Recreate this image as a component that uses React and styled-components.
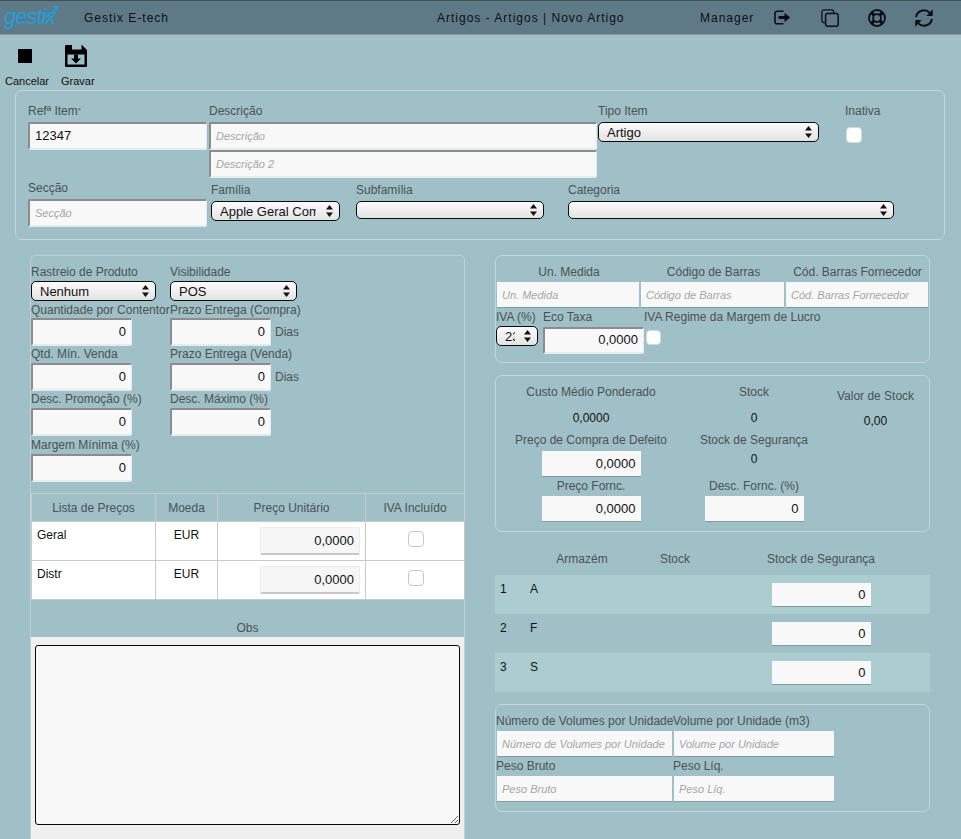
import React from 'react';
import styled, { createGlobalStyle } from 'styled-components';

const GlobalStyle = createGlobalStyle`
  html, body {
    margin: 0;
    padding: 0;
    height: 839px;
    overflow: hidden;
    background: #9fc0c6;
    font-family: "Liberation Sans", Arial, sans-serif;
    font-size: 12px;
  }
  * { box-sizing: border-box; }
`;

const Page = styled.div`
  width: 961px;
  height: 839px;
  overflow: hidden;
`;

const Header = styled.header`
  display: flex;
  align-items: center;
  height: 35px;
  background: #5f7a87;
  border-top: 1px solid #3f4f58;
  border-bottom: 1px solid #8b9699;
  color: #0c0f12;
  font-size: 12px;
  letter-spacing: 1px;
`;

const Logo = styled.div`
  position: relative;
  width: 84px;
  padding-left: 4px;
  margin-top: -2px;
  color: #1f9fdc;
  font-size: 22px;
  font-style: italic;
  letter-spacing: -1px;
  svg {
    position: absolute;
    left: 44px;
    top: 1px;
  }
`;

const HeaderText = styled.div`
  width: ${({ $w }) => $w}px;
  flex: none;
  white-space: nowrap;
`;

const HeaderIcon = styled.div`
  width: 47px;
  flex: none;
  display: flex;
  justify-content: center;
  color: #0c0f12;
`;

const Toolbar = styled.div`
  display: flex;
  gap: 12px;
  height: 55px;
  padding: 4px 0 0 5px;
`;

const ToolButton = styled.div`
  display: flex;
  flex-direction: column;
  align-items: center;
  color: #111;
  font-size: 11px;
  line-height: 14px;
`;

const ToolIcon = styled.div`
  height: 34px;
  margin: 0 4px 1px 0;
  display: flex;
  align-items: center;
  justify-content: center;
`;

const StopSquare = styled.div`
  width: 14px;
  height: 14px;
  background: #000;
`;

const Panel = styled.section`
  border: 1px solid #c3d8da;
  border-radius: 7px;
  margin-top: ${({ $mt }) => $mt || 0}px;
  height: ${({ $h }) => $h}px;
  padding: ${({ $pad }) => $pad || '0'};
`;

const TopPanel = styled(Panel)`
  width: 930px;
  margin-left: 15px;
  padding: 13px 0 0 12px;
`;

const Row = styled.div`
  display: flex;
`;

const Col = styled.div`
  width: ${({ $w }) => $w}px;
  flex: none;
  padding-top: ${({ $pt }) => $pt || 0}px;
`;

const Label = styled.label`
  display: block;
  height: 14px;
  line-height: 14px;
  margin-top: ${({ $mt }) => $mt || 0}px;
  margin-bottom: ${({ $mb }) => ($mb === undefined ? 4 : $mb)}px;
  color: #4b5254;
  font-size: 12px;
  white-space: nowrap;
  text-align: ${({ $center }) => ($center ? 'center' : 'left')};
`;

const Required = styled.span`
  font-size: 8px;
  vertical-align: 2px;
`;

const Input = styled.input`
  display: block;
  width: ${({ $w }) => $w}px;
  height: ${({ $h }) => $h || 28}px;
  margin: 0;
  padding: 0 5px 2px;
  background: #f8f8f8;
  border: none;
  border-top: 2px solid #8c8c8c;
  border-left: 2px solid #8c8c8c;
  border-right: 1px solid #e4ecee;
  border-bottom: 2px solid #e4ecee;
  border-radius: 2px;
  color: #111;
  font-family: inherit;
  font-size: 13px;
  text-align: ${({ $right }) => ($right ? 'right' : 'left')};
  &::placeholder {
    color: #a6a6a6;
    font-size: 11px;
    font-style: italic;
    opacity: 1;
  }
`;

const FlatInput = styled(Input)`
  padding: 0 5px;
  border: none;
  border-bottom: 1px solid #7d9da3;
  border-radius: 0;
  margin-left: ${({ $ml }) => $ml || 0}px;
`;

const CellInput = styled(Input)`
  padding: 0 5px;
  background: #f6f6f6;
  border: 1px solid #ececec;
  border-bottom: 2px solid #c8c8c8;
`;

const Check = styled.input.attrs({ type: 'checkbox' })`
  appearance: none;
  display: block;
  width: ${({ $size }) => $size || 16}px;
  height: ${({ $size }) => $size || 16}px;
  margin: ${({ $mt }) => $mt || 0}px 0 0 ${({ $ml }) => $ml || 0}px;
  background: #fff;
  border: 1px solid ${({ $line }) => $line || '#d8d8d8'};
  border-radius: 4px;
`;

const SelectBox = styled.div`
  position: relative;
  width: ${({ $w }) => $w}px;
  height: ${({ $h }) => $h || 20}px;
  svg {
    position: absolute;
    right: 7px;
    top: 50%;
    transform: translateY(-50%);
    pointer-events: none;
  }
`;

const SelectEl = styled.select`
  appearance: none;
  display: block;
  width: 100%;
  height: 100%;
  margin: 0;
  padding: 0 ${({ $pr }) => $pr || 20}px 0 8px;
  background: linear-gradient(#fbfbfb, #e3e3e3);
  border: 1px solid #0a0a0a;
  border-radius: 5px;
  color: #111;
  font-family: inherit;
  font-size: 13px;
`;

const Select = ({ w, h, value, pr }) => (
  <SelectBox $w={w} $h={h}>
    <SelectEl $pr={pr} defaultValue={value}>
      <option value={value}>{value}</option>
    </SelectEl>
    <svg width="7" height="12" viewBox="0 0 7 12">
      <path d="M3.5 0 7 4.6H0zM0 7.4h7L3.5 12z" fill="#111" />
    </svg>
  </SelectBox>
);

const Columns = styled.div`
  display: flex;
  gap: 30px;
  padding-left: 30px;
  margin-top: 15px;
`;

const LeftPanel = styled.section`
  width: 435px;
  height: 600px;
  flex: none;
  border: 1px solid #bdd2d6;
  border-bottom: none;
  border-radius: 5px 5px 0 0;
  padding-top: 8px;
`;

const FormGrid = styled.div`
  display: grid;
  grid-template-columns: 139px 1fr;
  grid-template-rows: 38px 45px 45px 46px 43px;
  height: 217px;
`;

const Field = styled.div`
  min-width: 0;
`;

const InputRow = styled.div`
  display: flex;
  align-items: center;
  gap: 4px;
  color: #4b5254;
  font-size: 12px;
`;

const PriceTable = styled.table`
  width: 433px;
  margin-top: 12px;
  table-layout: fixed;
  border-collapse: collapse;
  font-size: 12px;
  th {
    height: 28px;
    border: 1px solid #c4cdcf;
    color: #4b5254;
    font-weight: normal;
  }
  td {
    height: 39px;
    padding: 0;
    background: #fff;
    border: 1px solid #c8c8c8;
    color: #111;
    vertical-align: top;
  }
`;

const NameCell = styled.div`
  padding: 6px 0 0 5px;
`;

const CenterCell = styled.div`
  padding-top: 6px;
  text-align: center;
`;

const PriceCell = styled.div`
  display: flex;
  justify-content: flex-end;
  padding: 5px 5px 0 0;
`;

const CheckCell = styled.div`
  display: flex;
  justify-content: center;
  padding: 9px 0 0 1px;
`;

const ObsLabel = styled.div`
  margin-top: 21px;
  height: 16px;
  line-height: 14px;
  color: #4b5254;
  text-align: center;
`;

const ObsBox = styled.div`
  height: 202px;
  background: #f0f0f0;
  padding: 8px 4px 0;
`;

const ObsText = styled.textarea`
  display: block;
  width: 425px;
  height: 180px;
  margin: 0;
  background: #f8f8f8;
  border: 1px solid #0a0a0a;
  border-radius: 3px;
`;

const RightColumn = styled.div`
  width: 435px;
  flex: none;
`;

const MeasureGrid = styled.div`
  display: grid;
  grid-template-columns: 144px 145px 143px;
  padding-left: 1px;
`;

const TaxRow = styled.div`
  display: grid;
  grid-template-columns: 47px 101px 1fr;
  margin-top: 1px;
`;

const StockColumns = styled.div`
  display: grid;
  grid-template-columns: 190px 136px 107px;
`;

const StockCol = styled.div`
  display: flex;
  flex-direction: column;
  align-items: center;
  padding-top: ${({ $pt }) => $pt || 9}px;
`;

const Caption = styled.div`
  height: 14px;
  line-height: 14px;
  margin-top: ${({ $mt }) => $mt || 0}px;
  margin-bottom: ${({ $mb }) => $mb || 0}px;
  color: #4b5254;
  white-space: nowrap;
`;

const Value = styled.div`
  height: 14px;
  line-height: 14px;
  margin-top: ${({ $mt }) => $mt || 0}px;
  color: #111;
`;

const StockHeader = styled.div`
  display: grid;
  grid-template-columns: 35px 104px 82px 210px;
  margin-top: 20px;
  margin-bottom: 9px;
  height: 14px;
  line-height: 14px;
  color: #4b5254;
  text-align: center;
`;

const StockRow = styled.div`
  display: grid;
  grid-template-columns: 35px 104px 82px 210px;
  height: 39px;
  background: ${({ $odd }) => ($odd ? '#abcdcf' : 'transparent')};
  color: #111;
  line-height: 14px;
`;

const RowNum = styled.div`
  padding: 7px 0 0 5px;
`;

const RowName = styled.div`
  padding-top: 7px;
`;

const RowInput = styled.div`
  display: flex;
  justify-content: center;
  padding-top: 8px;
`;

const VolumeGrid = styled.div`
  display: grid;
  grid-template-columns: 177px 1fr;
  grid-auto-rows: 45px;
`;

const ExitIcon = () => (
  <svg width="17" height="15" viewBox="0 0 17 15" fill="none">
    <path d="M9.5 1.2H3A2 2 0 0 0 1 3.2v8.6a2 2 0 0 0 2 2h6.5" stroke="currentColor" strokeWidth="1.6" />
    <path d="M4.5 6h6V2.8L16.2 7.5l-5.7 4.7V9h-6z" fill="currentColor" />
  </svg>
);

const CopyIcon = () => (
  <svg width="18" height="18" viewBox="0 0 18 18" fill="none" stroke="currentColor" strokeWidth="1.3">
    <path d="M4 13.5H2.6A1.8 1.8 0 0 1 .9 11.7V2.6A1.8 1.8 0 0 1 2.6.8h8.2A1.8 1.8 0 0 1 12.6 2.6V4" />
    <rect x="4.6" y="4.6" width="12.6" height="12.6" rx="2" strokeWidth="1.5" />
  </svg>
);

const RingIcon = () => (
  <svg width="18" height="18" viewBox="0 0 18 18" fill="none" stroke="currentColor">
    <circle cx="9" cy="9" r="8" strokeWidth="1.8" />
    <circle cx="9" cy="9" r="3.9" strokeWidth="1.8" />
    <path d="M3.3 3.3l3 3M14.7 3.3l-3 3M3.3 14.7l3-3M14.7 14.7l-3-3" strokeWidth="3.2" />
  </svg>
);

const RefreshIcon = () => (
  <svg width="18" height="18" viewBox="0 0 18 18" fill="none">
    <path d="M1.1 8A8 8 0 0 1 14.6 3.6M16.9 10A8 8 0 0 1 3.4 14.4" stroke="currentColor" strokeWidth="2" />
    <path d="M17.7.3V7h-6.4zM.3 17.7V11h6.4z" fill="currentColor" />
  </svg>
);

const SaveIcon = () => (
  <svg width="22" height="22" viewBox="0 0 22 22">
    <path
      fillRule="evenodd"
      d="M1 0h16l5 5v16a1 1 0 0 1-1 1H1a1 1 0 0 1-1-1V1a1 1 0 0 1 1-1zm6 0v4.5h9.5V0zM2.5 9.5v10h17v-10z"
      fill="#000"
    />
    <path d="M9 9.5h4v4h3l-5 5-5-5h3z" fill="#000" />
  </svg>
);

const LogoArrow = () => (
  <svg width="16" height="14" viewBox="0 0 16 14" fill="none">
    <path d="M1 13 13 2.5" stroke="#1f9fdc" strokeWidth="1.6" />
    <path d="M9 1.5 15 .5l-1.5 6z" fill="#1f9fdc" />
  </svg>
);

const LeftField = ({ label, suffix, first }) => (
  <Field>
    <Label $mt={first ? 1 : 0} $mb={first ? 1 : 2}>{label}</Label>
    <InputRow>
      <Input $w={101} $right defaultValue="0" />
      {suffix}
    </InputRow>
  </Field>
);

const prices = [{ name: 'Geral' }, { name: 'Distr' }];
const warehouses = [
  { id: 1, name: 'A' },
  { id: 2, name: 'F' },
  { id: 3, name: 'S' },
];

const App = () => (
  <Page>
    <GlobalStyle />
    <Header>
      <Logo>
        gestix
        <LogoArrow />
      </Logo>
      <HeaderText $w={353}>Gestix E-tech</HeaderText>
      <HeaderText $w={263}>Artigos - Artigos | Novo Artigo</HeaderText>
      <HeaderText $w={59}>Manager</HeaderText>
      <HeaderIcon><ExitIcon /></HeaderIcon>
      <HeaderIcon><CopyIcon /></HeaderIcon>
      <HeaderIcon><RingIcon /></HeaderIcon>
      <HeaderIcon><RefreshIcon /></HeaderIcon>
    </Header>

    <Toolbar>
      <ToolButton>
        <ToolIcon><StopSquare /></ToolIcon>
        Cancelar
      </ToolButton>
      <ToolButton>
        <ToolIcon><SaveIcon /></ToolIcon>
        Gravar
      </ToolButton>
    </Toolbar>

    <TopPanel $h={150}>
      <Row>
        <Col $w={181}>
          <Label>Refª Item<Required>*</Required></Label>
          <Input $w={179} defaultValue="12347" />
        </Col>
        <Col $w={389}>
          <Label>Descrição</Label>
          <Input $w={388} placeholder="Descrição" />
          <Input $w={388} placeholder="Descrição 2" />
        </Col>
        <Col $w={247}>
          <Label>Tipo Item</Label>
          <Select w={221} value="Artigo" />
        </Col>
        <Col $w={40}>
          <Label>Inativa</Label>
          <Check $size={16} $mt={9} $ml={1} />
        </Col>
      </Row>
      <Row>
        <Col $w={183} $pt={3}>
          <Label>Secção</Label>
          <Input $w={179} placeholder="Secção" />
        </Col>
        <Col $w={145} $pt={5}>
          <Label>Família</Label>
          <Select w={129} value="Apple Geral Comercial" pr={23} />
        </Col>
        <Col $w={212} $pt={5}>
          <Label>Subfamília</Label>
          <Select w={188} h={18} value="" />
        </Col>
        <Col $w={326} $pt={5}>
          <Label>Categoria</Label>
          <Select w={326} h={18} value="" />
        </Col>
      </Row>
    </TopPanel>

    <Columns>
      <LeftPanel>
        <FormGrid>
          <Field>
            <Label $mt={1} $mb={2}>Rastreio de Produto</Label>
            <Select w={125} value="Nenhum" />
          </Field>
          <Field>
            <Label $mt={1} $mb={2}>Visibilidade</Label>
            <Select w={127} value="POS" />
          </Field>
          <LeftField first label="Quantidade por Contentor" />
          <LeftField first label="Prazo Entrega (Compra)" suffix="Dias" />
          <LeftField label="Qtd. Mín. Venda" />
          <LeftField label="Prazo Entrega (Venda)" suffix="Dias" />
          <LeftField label="Desc. Promoção (%)" />
          <LeftField label="Desc. Máximo (%)" />
          <LeftField label="Margem Mínima (%)" />
        </FormGrid>

        <PriceTable>
          <colgroup>
            <col width="124" />
            <col width="62" />
            <col width="148" />
            <col width="99" />
          </colgroup>
          <thead>
            <tr>
              <th>Lista de Preços</th>
              <th>Moeda</th>
              <th>Preço Unitário</th>
              <th>IVA Incluído</th>
            </tr>
          </thead>
          <tbody>
            {prices.map(({ name }) => (
              <tr key={name}>
                <td><NameCell>{name}</NameCell></td>
                <td><CenterCell>EUR</CenterCell></td>
                <td>
                  <PriceCell>
                    <CellInput $w={100} $right defaultValue="0,0000" />
                  </PriceCell>
                </td>
                <td><CheckCell><Check $line="#c8c8c8" /></CheckCell></td>
              </tr>
            ))}
          </tbody>
        </PriceTable>

        <ObsLabel>Obs</ObsLabel>
        <ObsBox>
          <ObsText />
        </ObsBox>
      </LeftPanel>

      <RightColumn>
        <Panel $h={108} $pad="8px 0 0">
          <MeasureGrid>
            {[
              ['Un. Medida', 142],
              ['Código de Barras', 143],
              ['Cód. Barras Fornecedor', 142],
            ].map(([text, width]) => (
              <Field key={text}>
                <Label $center $mt={1} $mb={3}>{text}</Label>
                <FlatInput $w={width} $h={26} placeholder={text} />
              </Field>
            ))}
          </MeasureGrid>
          <TaxRow>
            <Field>
              <Label $mt={1} $mb={2}>IVA (%)</Label>
              <Select w={42} value="23" pr={22} />
            </Field>
            <Field>
              <Label $mt={1} $mb={3}>Eco Taxa</Label>
              <Input $w={101} $h={27} $right defaultValue="0,0000" />
            </Field>
            <Field>
              <Label $mt={1} $mb={6}>IVA Regime da Margem de Lucro</Label>
              <Check $size={15} $ml={2} />
            </Field>
          </TaxRow>
        </Panel>

        <Panel $mt={12} $h={157}>
          <StockColumns>
            <StockCol>
              <Caption>Custo Médio Ponderado</Caption>
              <Value $mt={12}>0,0000</Value>
              <Caption $mt={8} $mb={4}>Preço de Compra de Defeito</Caption>
              <FlatInput $w={99} $h={26} $right defaultValue="0,0000" />
              <Caption $mt={2} $mb={3}>Preço Fornc.</Caption>
              <FlatInput $w={99} $h={26} $right defaultValue="0,0000" />
            </StockCol>
            <StockCol>
              <Caption>Stock</Caption>
              <Value $mt={12}>0</Value>
              <Caption $mt={8}>Stock de Segurança</Caption>
              <Value $mt={5}>0</Value>
              <Caption $mt={13} $mb={3}>Desc. Fornc. (%)</Caption>
              <FlatInput $w={99} $h={26} $right defaultValue="0" />
            </StockCol>
            <StockCol $pt={13}>
              <Caption>Valor de Stock</Caption>
              <Value $mt={11}>0,00</Value>
            </StockCol>
          </StockColumns>
        </Panel>

        <StockHeader>
          <span />
          <span>Armazém</span>
          <span>Stock</span>
          <span>Stock de Segurança</span>
        </StockHeader>
        {warehouses.map(({ id, name }) => (
          <StockRow key={id} $odd={id % 2 === 1}>
            <RowNum>{id}</RowNum>
            <RowName>{name}</RowName>
            <span />
            <RowInput>
              <FlatInput $w={99} $h={24} $right defaultValue="0" />
            </RowInput>
          </StockRow>
        ))}

        <Panel $mt={12} $h={108} $pad="9px 0 0">
          <VolumeGrid>
            <Field>
              <Label $mb={3}>Número de Volumes por Unidade</Label>
              <FlatInput $w={175} $ml={1} $h={26} placeholder="Número de Volumes por Unidade" />
            </Field>
            <Field>
              <Label $mb={3}>Volume por Unidade (m3)</Label>
              <FlatInput $w={160} $ml={1} $h={26} placeholder="Volume por Unidade" />
            </Field>
            <Field>
              <Label $mb={3}>Peso Bruto</Label>
              <FlatInput $w={175} $ml={1} $h={26} placeholder="Peso Bruto" />
            </Field>
            <Field>
              <Label $mb={3}>Peso Líq.</Label>
              <FlatInput $w={160} $ml={1} $h={26} placeholder="Peso Líq." />
            </Field>
          </VolumeGrid>
        </Panel>
      </RightColumn>
    </Columns>
  </Page>
);

export default App;
